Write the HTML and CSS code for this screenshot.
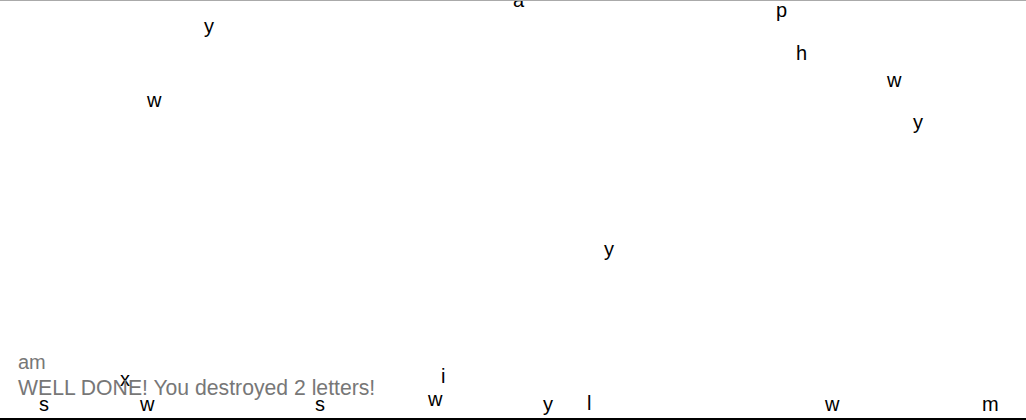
FILE: index.html
```html
<!DOCTYPE html>
<html>
<head>
<meta charset="utf-8">
<link rel="stylesheet" href="styles.css">
</head>
<body>
<div class="game">
  <span class="letter" style="left:204px;top:13px">y</span>
  <span class="letter" style="left:147px;top:87px">w</span>
  <span class="letter" style="left:513px;top:-13px">a</span>
  <span class="letter" style="left:776px;top:-3px">p</span>
  <span class="letter" style="left:796px;top:40px">h</span>
  <span class="letter" style="left:887px;top:67px">w</span>
  <span class="letter" style="left:913px;top:109px">y</span>
  <span class="letter" style="left:604px;top:236px">y</span>
  <span class="letter" style="left:120px;top:366px">x</span>
  <span class="letter" style="left:441px;top:363px">i</span>
  <span class="letter" style="left:39px;top:391px">s</span>
  <span class="letter" style="left:140px;top:391px">w</span>
  <span class="letter" style="left:315px;top:391px">s</span>
  <span class="letter" style="left:428px;top:386px">w</span>
  <span class="letter" style="left:543px;top:391px">y</span>
  <span class="letter" style="left:587px;top:390px">l</span>
  <span class="letter" style="left:825px;top:391px">w</span>
  <span class="letter" style="left:982px;top:391px">m</span>
  <div class="status">
    <div class="typed">am</div>
    <div class="message">WELL DONE! You destroyed 2 letters!</div>
  </div>
</div>
</body>
</html>
```
FILE: styles.css
```css
html, body {
  margin: 0;
  padding: 0;
  background: #fff;
}
.game {
  position: relative;
  width: 1026px;
  height: 420px;
  box-sizing: border-box;
  border-top: 1px solid #aaaaaa;
  border-bottom: 2px solid #000;
  overflow: hidden;
  font-family: "Liberation Sans", Arial, sans-serif;
}
.letter {
  position: absolute;
  font-size: 20px;
  line-height: 24px;
  color: #000;
}
.status {
  position: absolute;
  left: 18px;
  top: 349px;
  color: #777;
}
.typed {
  font-size: 20px;
  line-height: 24px;
}
.message {
  font-size: 21.2px;
  line-height: 26px;
  margin-top: 1px;
}
```
